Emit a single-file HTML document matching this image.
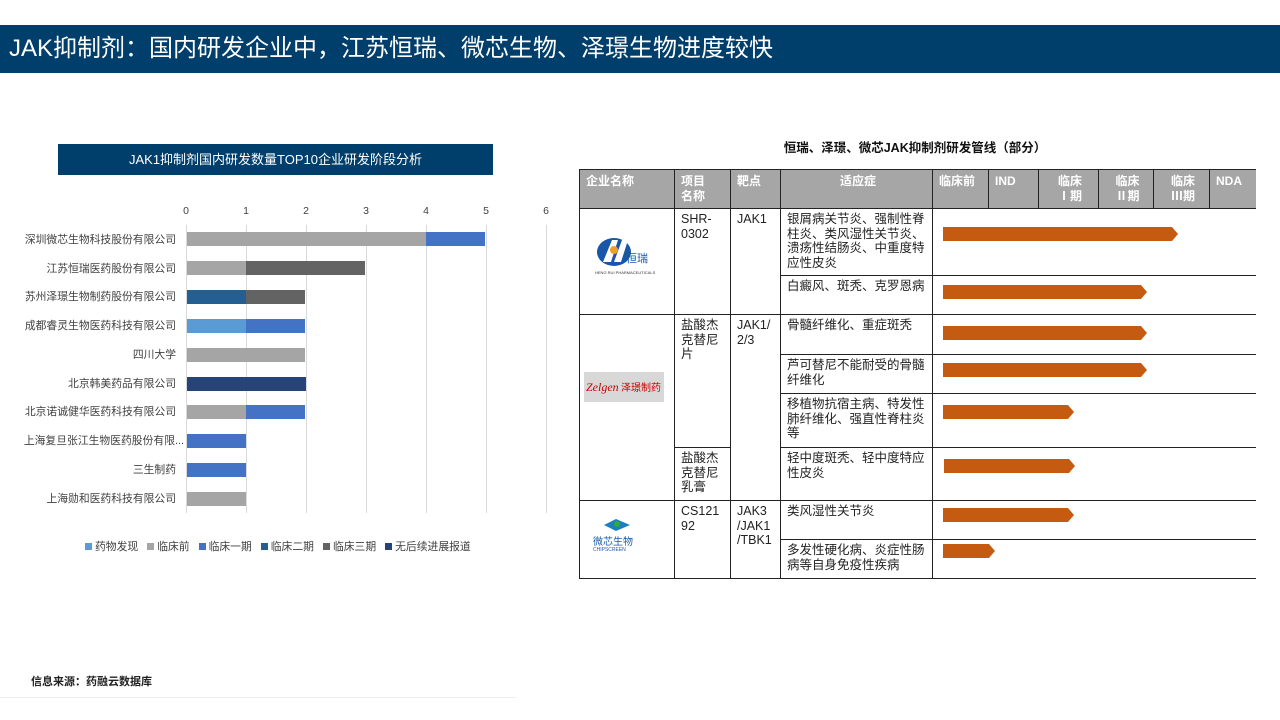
<!DOCTYPE html>
<html><head><meta charset="utf-8"><style>
*{margin:0;padding:0;box-sizing:border-box}
body{width:1280px;height:720px;background:#fff;position:relative;overflow:hidden;font-family:"Liberation Sans","Noto Sans CJK SC",sans-serif;color:#222}
.a{position:absolute}
.lbl{position:absolute;right:1104px;font-size:10.8px;color:#404040;white-space:nowrap;line-height:14px}
.bar{position:absolute;height:14px}
.tick{position:absolute;top:205px;font-size:10.5px;color:#404040;width:20px;text-align:center}
.grid{position:absolute;top:225px;height:288px;width:1px;background:#d9d9d9}
table{position:absolute;left:579px;top:169px;border-collapse:collapse;font-size:12.5px;line-height:14.5px;table-layout:fixed;width:676px}
td,th{border:1px solid #222;vertical-align:top;padding:3px 3px 0 6px;text-align:left;font-weight:normal}
th{background:#a6a6a6;color:#fff;font-weight:bold;height:39px;padding-top:4px;font-size:12px;line-height:15px}
.leg{display:inline-block;width:7px;height:7px;margin:0 3px 0 9px}
</style></head><body>
<div class="a" style="left:0;top:25px;width:1280px;height:48px;background:#003e6c;color:#fff;font-size:24px;line-height:48px;padding-left:9px">JAK抑制剂：国内研发企业中，江苏恒瑞、微芯生物、泽璟生物进度较快</div>

<div class="a" style="left:58px;top:144px;width:435px;height:31px;background:#003e6c;color:#fff;font-size:13px;line-height:31px;text-align:center">JAK1抑制剂国内研发数量TOP10企业研发阶段分析</div>

<div class="grid" style="left:186px"></div><div class="grid" style="left:246px"></div><div class="grid" style="left:306px"></div><div class="grid" style="left:366px"></div><div class="grid" style="left:426px"></div><div class="grid" style="left:486px"></div><div class="grid" style="left:546px"></div>
<div class="tick" style="left:176px">0</div><div class="tick" style="left:236px">1</div><div class="tick" style="left:296px">2</div><div class="tick" style="left:356px">3</div><div class="tick" style="left:416px">4</div><div class="tick" style="left:476px">5</div><div class="tick" style="left:536px">6</div>

<div class="lbl" style="top:233px">深圳微芯生物科技股份有限公司</div>
<div class="lbl" style="top:262px">江苏恒瑞医药股份有限公司</div>
<div class="lbl" style="top:290px">苏州泽璟生物制药股份有限公司</div>
<div class="lbl" style="top:319px">成都睿灵生物医药科技有限公司</div>
<div class="lbl" style="top:348px">四川大学</div>
<div class="lbl" style="top:377px">北京韩美药品有限公司</div>
<div class="lbl" style="top:405px">北京诺诚健华医药科技有限公司</div>
<div class="lbl" style="top:434px;right:1096px">上海复旦张江生物医药股份有限...</div>
<div class="lbl" style="top:463px">三生制药</div>
<div class="lbl" style="top:492px">上海勋和医药科技有限公司</div>

<div class="bar" style="left:187px;top:232px;width:239px;background:#a5a5a5"></div><div class="bar" style="left:426px;top:232px;width:59px;background:#4472c4"></div>
<div class="bar" style="left:187px;top:261px;width:59px;background:#a5a5a5"></div><div class="bar" style="left:246px;top:261px;width:119px;background:#636363"></div>
<div class="bar" style="left:187px;top:290px;width:59px;background:#255e91"></div><div class="bar" style="left:246px;top:290px;width:59px;background:#636363"></div>
<div class="bar" style="left:187px;top:319px;width:59px;background:#5b9bd5"></div><div class="bar" style="left:246px;top:319px;width:59px;background:#4472c4"></div>
<div class="bar" style="left:187px;top:348px;width:118px;background:#a5a5a5"></div>
<div class="bar" style="left:187px;top:377px;width:119px;background:#264478"></div>
<div class="bar" style="left:187px;top:405px;width:59px;background:#a5a5a5"></div><div class="bar" style="left:246px;top:405px;width:59px;background:#4472c4"></div>
<div class="bar" style="left:187px;top:434px;width:59px;background:#4472c4"></div>
<div class="bar" style="left:187px;top:463px;width:59px;background:#4472c4"></div>
<div class="bar" style="left:187px;top:492px;width:59px;background:#a5a5a5"></div>

<div class="a" style="left:76px;top:538px;font-size:10.8px;color:#404040;white-space:nowrap"><span class="leg" style="background:#5b9bd5"></span>药物发现<span class="leg" style="background:#a5a5a5"></span>临床前<span class="leg" style="background:#4472c4"></span>临床一期<span class="leg" style="background:#255e91"></span>临床二期<span class="leg" style="background:#636363"></span>临床三期<span class="leg" style="background:#264478"></span>无后续进展报道</div>

<div class="a" style="left:31px;top:673px;font-size:11px;font-weight:bold;color:#222">信息来源：药融云数据库</div>
<div class="a" style="left:0;top:697px;width:516px;height:1px;background:#eee"></div>

<div class="a" style="left:580px;top:137px;width:670px;text-align:center;font-size:12.5px;font-weight:bold;color:#111">恒瑞、泽璟、微芯JAK抑制剂研发管线（部分）</div>

<table>
<colgroup><col style="width:95px"><col style="width:56px"><col style="width:50px"><col style="width:152px"><col style="width:56px"><col style="width:50px"><col style="width:60px"><col style="width:55px"><col style="width:56px"><col style="width:46px"></colgroup>
<tr><th>企业名称</th><th>项目<br>名称</th><th>靶点</th><th style="text-align:center">适应症</th><th>临床前</th><th>IND</th><th style="text-align:center">临床<br>Ⅰ期</th><th style="text-align:center">临床<br>Ⅱ期</th><th style="text-align:center">临床<br>Ⅲ期</th><th style="border-right:none">NDA</th></tr>
<tr style="height:67px"><td rowspan="2"></td><td rowspan="2">SHR-<br>0302</td><td rowspan="2">JAK1</td><td>银屑病关节炎、强制性脊柱炎、类风湿性关节炎、溃疡性结肠炎、中重度特应性皮炎</td><td colspan="6" style="border-right:none"></td></tr>
<tr style="height:39px"><td>白癜风、斑秃、克罗恩病</td><td colspan="6" style="border-right:none"></td></tr>
<tr style="height:40px"><td rowspan="4"></td><td rowspan="3">盐酸杰克替尼片</td><td rowspan="4">JAK1/<br>2/3</td><td>骨髓纤维化、重症斑秃</td><td colspan="6" style="border-right:none"></td></tr>
<tr style="height:39px"><td>芦可替尼不能耐受的骨髓纤维化</td><td colspan="6" style="border-right:none"></td></tr>
<tr style="height:54px"><td>移植物抗宿主病、特发性肺纤维化、强直性脊柱炎等</td><td colspan="6" style="border-right:none"></td></tr>
<tr style="height:53px"><td>盐酸杰克替尼乳膏</td><td>轻中度斑秃、轻中度特应性皮炎</td><td colspan="6" style="border-right:none"></td></tr>
<tr style="height:39px"><td rowspan="2"></td><td rowspan="2">CS121<br>92</td><td rowspan="2">JAK3<br>/JAK1<br>/TBK1</td><td>类风湿性关节炎</td><td colspan="6" style="border-right:none"></td></tr>
<tr style="height:39px"><td>多发性硬化病、炎症性肠病等自身免疫性疾病</td><td colspan="6" style="border-right:none"></td></tr>
</table>

<svg class="a" style="left:0;top:0" width="1280" height="720">
<g fill="#c55a11">
<polygon points="943,227 1172,227 1178,234 1172,241 943,241"/>
<polygon points="943,285 1141,285 1147,292 1141,299 943,299"/>
<polygon points="943,326 1141,326 1147,333 1141,340 943,340"/>
<polygon points="943,363 1141,363 1147,370 1141,377 943,377"/>
<polygon points="943,405 1068,405 1074,412 1068,419 943,419"/>
<polygon points="944,459 1069,459 1075,466 1069,473 944,473"/>
<polygon points="943,508 1068,508 1074,515 1068,522 943,522"/>
<polygon points="943,544 989,544 995,551 989,558 943,558"/>
</g>
<ellipse cx="614" cy="252" rx="17" ry="14" fill="#1a56a8"/>
<path d="M603 262 L612 240 L618 240 L611 262 Z M614 262 L622 240 L628 240 L621 262 Z" fill="#fff"/>
<circle cx="614" cy="250" r="4" fill="#f0a020"/>
<text x="626" y="262" font-size="11" fill="#1a56a8" font-family="Noto Sans CJK SC">恒瑞</text>
<text x="595" y="274" font-size="4" fill="#333">HENG RUI PHARMACEUTICALS</text>
<rect x="584" y="372" width="80" height="30" fill="#d8d8d8"/>
<text x="586" y="391" font-size="12" fill="#c00" font-style="italic" font-family="Liberation Serif">Zelgen</text>
<text x="621" y="391" font-size="10" fill="#c00" font-family="Noto Sans CJK SC">泽璟制药</text>
<path d="M604 525 L616 519 L630 525 L616 531 Z" fill="#1b7fc0"/>
<circle cx="617" cy="524" r="3" fill="#3a3"/>
<text x="593" y="545" font-size="10" fill="#1b5aa8" font-family="Noto Sans CJK SC">微芯生物</text>
<text x="593" y="551" font-size="5" fill="#1b5aa8">CHIPSCREEN</text>
</svg>
</body></html>
